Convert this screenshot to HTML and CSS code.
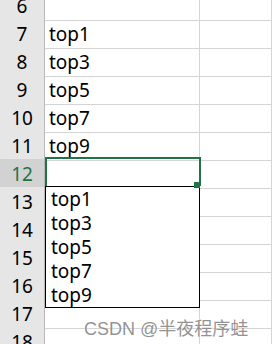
FILE: index.html
```html
<!DOCTYPE html>
<html lang="en">
<head>
    <meta charset="UTF-8">
    <meta name="viewport" content="width=device-width, initial-scale=1.0">
    <title>Sheet</title>
    <link rel="stylesheet" href="styles.css">
</head>
<body>
    <div id="sheet">
        <div class="row"><div class="head">6</div><div class="cell"></div><div class="cell"></div></div>
        <div class="row"><div class="head">7</div><div class="cell">top1</div><div class="cell"></div></div>
        <div class="row"><div class="head">8</div><div class="cell">top3</div><div class="cell"></div></div>
        <div class="row"><div class="head">9</div><div class="cell">top5</div><div class="cell"></div></div>
        <div class="row"><div class="head">10</div><div class="cell">top7</div><div class="cell"></div></div>
        <div class="row"><div class="head">11</div><div class="cell">top9</div><div class="cell"></div></div>
        <div class="row active"><div class="head">12</div><div class="cell"></div><div class="cell"></div></div>
        <div class="row"><div class="head">13</div><div class="cell"></div><div class="cell"></div></div>
        <div class="row"><div class="head">14</div><div class="cell"></div><div class="cell"></div></div>
        <div class="row"><div class="head">15</div><div class="cell"></div><div class="cell"></div></div>
        <div class="row"><div class="head">16</div><div class="cell"></div><div class="cell"></div></div>
        <div class="row"><div class="head">17</div><div class="cell"></div><div class="cell"></div></div>
        <div class="row"><div class="head">18</div><div class="cell"></div><div class="cell"></div></div>
    </div>
    <ul id="suggest">
        <li>top1</li>
        <li>top3</li>
        <li>top5</li>
        <li>top7</li>
        <li>top9</li>
    </ul>
    <div id="selection"><span id="handle"></span></div>
    <div id="watermark">CSDN @半夜程序蛙</div>
</body>
</html>
```

FILE: styles.css
```css
:root{
    --grid: #d4d4d4;
    --head-bg: #e6e6e6;
    --green: #217346;
}

*{
    box-sizing: border-box;
    margin: 0;
    padding: 0;
}

body{
    width: 272px;
    height: 344px;
    overflow: hidden;
    position: relative;
    background: white;
    font-family: 'Noto Sans', sans-serif;
    font-size: 19px;
    color: #000;
}

#sheet{
    margin-top: -9px;
}

.row{
    display: grid;
    grid-template-columns: 45px 155px 1fr;
    height: 28px;
}

.head, .cell{
    border-bottom: 1px solid var(--grid);
    border-right: 1px solid var(--grid);
    line-height: 27px;
    padding-top: 2px;
}

.head{
    background-color: var(--head-bg);
    border-right-color: #b8b8b8;
    border-bottom-color: #c6c6c6;
    text-align: center;
}

.cell{
    padding-left: 4px;
}

.active .head{
    background-color: #d2d2d2;
    color: var(--green);
}

#suggest{
    position: absolute;
    left: 45px;
    top: 186px;
    width: 155px;
    height: 122px;
    border: 1px solid #000;
    background: white;
    list-style: none;
    padding-left: 5px;
}

#suggest li{
    line-height: 24px;
}

#selection{
    position: absolute;
    left: 45px;
    top: 157px;
    width: 156px;
    height: 29px;
    border: 2px solid var(--green);
    border-bottom: 0;
}

#handle{
    position: absolute;
    right: -1px;
    bottom: -2px;
    width: 6px;
    height: 6px;
    background-color: var(--green);
}

#watermark{
    position: absolute;
    left: 84px;
    top: 314px;
    font-family: 'Liberation Sans', 'Noto Sans CJK SC', sans-serif;
    font-size: 18px;
    color: rgba(110, 110, 110, 0.75);
    text-shadow: 0 0 2px white;
    white-space: nowrap;
}
```
